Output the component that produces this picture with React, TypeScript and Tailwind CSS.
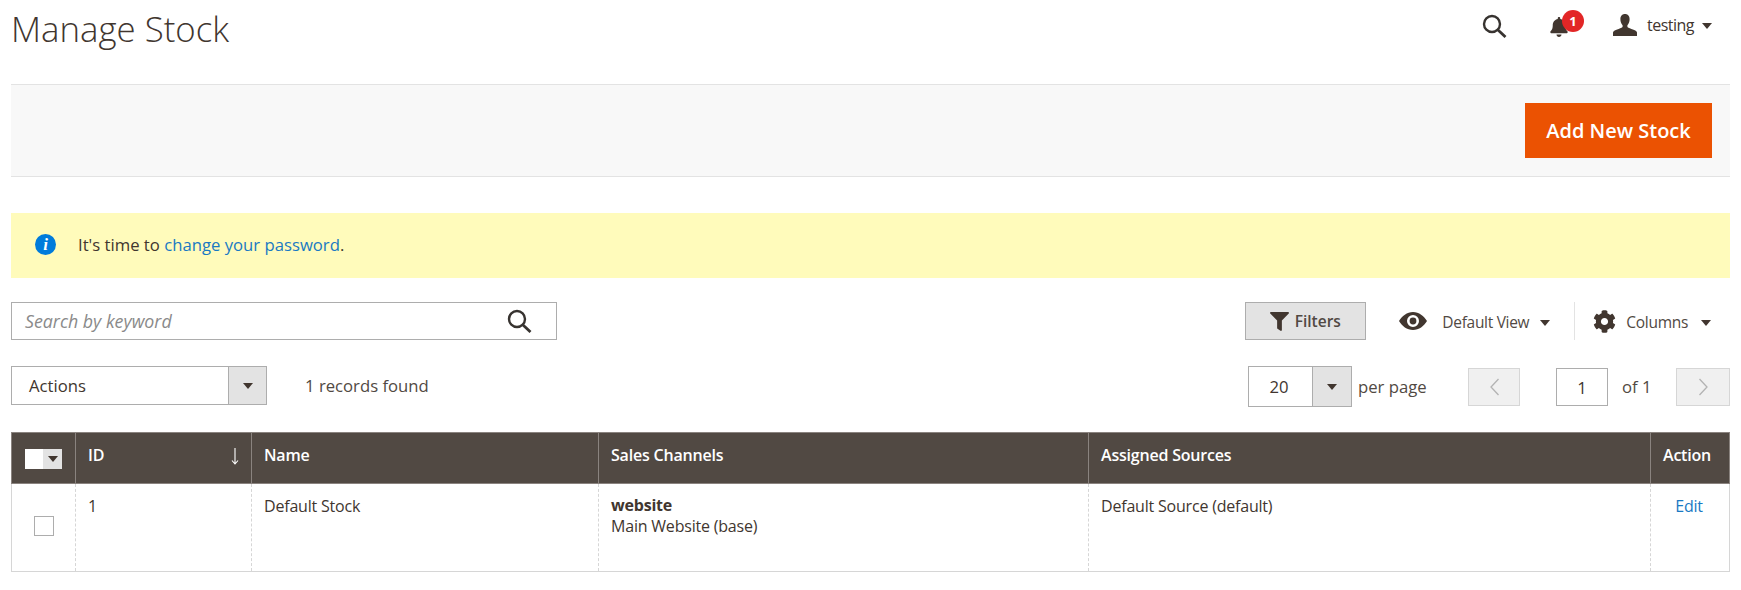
import { FaBell, FaCog, FaFilter } from 'react-icons/fa';

const Caret = ({ className = '' }: { className?: string }) => (
  <span className={`inline-block w-0 h-0 border-x-[5px] border-x-transparent border-t-[6px] border-t-[#41362f] ${className}`} />
);

const SearchIcon = ({ className = '' }: { className?: string }) => (
  <svg className={className} viewBox="0 0 25 24" fill="none" stroke="#373330" strokeWidth="2.4">
    <circle cx="10" cy="10" r="8" />
    <path d="M16 16l7.5 7" strokeWidth="2.8" />
  </svg>
);

const UserIcon = () => (
  <svg className="w-[24px] h-[22px]" viewBox="0 0 24 22" fill="#41362f">
    <path d="M12 0c3 0 4.6 2.2 4.6 5.2 0 2.2-.8 4.6-2.2 6v1.6c0 .8 1.6 1.3 4 2.2 3 1.1 5.6 2 5.6 3.6V22H0v-3.4c0-1.6 2.6-2.5 5.6-3.6 2.4-.9 4-1.4 4-2.2v-1.6c-1.4-1.4-2.2-3.8-2.2-6C7.4 2.2 9 0 12 0z" />
  </svg>
);

const EyeIcon = () => (
  <svg className="w-[28px] h-[18px]" viewBox="0 0 28 18">
    <path fill="#41362f" fillRule="evenodd" d="M14 0c6 0 11 4 14 9-3 5-8 9-14 9S3 14 0 9c3-5 8-9 14-9zm0 3a6 6 0 1 0 0 12 6 6 0 0 0 0-12z" />
    <circle cx="14" cy="9" r="3.4" fill="#41362f" />
  </svg>
);

const Chevron = ({ d }: { d: string }) => (
  <svg className="w-[11px] h-[18px]" viewBox="0 0 11 18" fill="none" stroke="#b3b3b3" strokeWidth="1.3">
    <path d={d} />
  </svg>
);

export default function App() {
  return (
    <div className="w-[1741px] h-[590px] overflow-hidden bg-white px-[11px] font-['Open_Sans',sans-serif] text-[16px] text-[#41362f]">
      {/* Page header */}
      <div className="h-[84px] flex justify-between">
        <h1 className="text-[34.8px] font-light leading-[46px] text-[#41362f] pt-[6px]">Manage Stock</h1>
        <div className="flex items-start pt-[14px] pr-[18px]">
          <SearchIcon className="w-[25px] h-[24px]" />
          <div className="relative ml-[43px] mt-[3px] w-[17px]">
            <FaBell className="w-[18px] h-[20px] text-[#41362f]" />
            <span className="absolute left-[12px] -top-[7px] w-[22px] h-[22px] rounded-full bg-[#e22626] text-white text-[13px] font-bold leading-[22px] text-center">1</span>
          </div>
          <div className="ml-[46px]"><UserIcon /></div>
          <span className="ml-[10px] text-[16px] leading-[22px] tracking-[-0.5px] text-[#41362f]">testing</span>
          <Caret className="ml-[8px] mt-[9px]" />
        </div>
      </div>

      {/* Action band */}
      <div className="h-[93px] bg-[#f8f8f8] border-y border-[#e3e3e3] flex items-center justify-end pr-[18px]">
        <button className="w-[187px] h-[55px] bg-[#eb5202] text-white text-[20px] font-semibold">Add New Stock</button>
      </div>

      {/* Message */}
      <div className="mt-[36px] h-[65px] bg-[#fffbbb] flex items-center pl-[24px] pb-[2px] text-[16.7px]">
        <span className="w-[21px] h-[21px] rounded-full bg-[#007bdb] text-white text-center font-['Liberation_Serif',serif] italic font-bold text-[17px] leading-[21px]">i</span>
        <span className="ml-[22px]">
          It's time to <a className="text-[#1979c3]">change your password</a>.
        </span>
      </div>

      {/* Search and view controls */}
      <div className="mt-[24px] flex items-center h-[38px]">
        <div className="w-[546px] h-[38px] border border-[#adadad] flex items-center justify-between pl-[13px] pr-[24px]">
          <span className="italic text-[#8a8a8a] text-[17.8px]">Search by keyword</span>
          <SearchIcon className="w-[25px] h-[24px]" />
        </div>
        <button className="ml-auto w-[121px] h-[38px] bg-[#e3e3e3] border border-[#adadad] flex items-center justify-center gap-[5px] font-semibold text-[#514943] text-[15.5px] pr-[2px]">
          <FaFilter className="w-[21px] h-[19px] text-[#41362f]" />
          <span className="mt-[1px]">Filters</span>
        </button>
        <div className="ml-[33px] flex items-center">
          <EyeIcon />
          <span className="ml-[15px] mt-[3px] text-[15.5px] tracking-[-0.3px] text-[#514943]">Default View</span>
          <Caret className="ml-[11px] mt-[3px]" />
        </div>
        <div className="ml-[24px] w-px h-[38px] bg-[#e3e3e3]" />
        <div className="ml-[18px] flex items-center pr-[19px]">
          <FaCog className="w-[23px] h-[23px] text-[#41362f]" />
          <span className="ml-[10px] mt-[3px] text-[15.5px] tracking-[-0.3px] text-[#514943]">Columns</span>
          <Caret className="ml-[13px] mt-[3px]" />
        </div>
      </div>

      {/* Mass actions and pager */}
      <div className="mt-[26px] flex items-start h-[41px] text-[16.7px]">
        <div className="w-[256px] h-[39px] border border-[#adadad] flex">
          <span className="flex-1 pl-[17px] leading-[38px] text-[#41362f]">Actions</span>
          <span className="w-[38px] bg-[#e3e3e3] border-l border-[#adadad] flex items-center justify-center"><Caret /></span>
        </div>
        <span className="ml-[38px] leading-[39px] text-[#514943]">1 records found</span>
        <div className="ml-auto flex items-start leading-[41px]">
          <div className="w-[104px] h-[41px] border border-[#adadad] flex">
            <span className="flex-1 text-center leading-[40px] text-[#41362f] pr-[3px]">20</span>
            <span className="w-[39px] bg-[#e3e3e3] border-l border-[#adadad] flex items-center justify-center"><Caret /></span>
          </div>
          <span className="ml-[6px] w-[110px] text-[#514943]">per page</span>
          <span className="mt-[2px] w-[52px] h-[38px] bg-[#f0f0f0] border border-[#d6d6d6] flex items-center justify-center"><Chevron d="M9.5 1L2 9l7.5 8" /></span>
          <span className="mt-[2px] ml-[36px] w-[52px] h-[38px] border border-[#adadad] text-center leading-[37px] text-[#41362f]">1</span>
          <span className="ml-[14px] w-[54px] text-[#514943]">of 1</span>
          <span className="mt-[2px] w-[54px] h-[38px] bg-[#f0f0f0] border border-[#d6d6d6] flex items-center justify-center"><Chevron d="M1.5 1L9 9l-7.5 8" /></span>
        </div>
      </div>

      {/* Grid */}
      <table className="mt-[25px] w-[1718px] table-fixed border-collapse text-left">
        <colgroup>
          <col className="w-[64px]" />
          <col className="w-[176px]" />
          <col className="w-[347px]" />
          <col className="w-[490px]" />
          <col className="w-[562px]" />
          <col className="w-[79px]" />
        </colgroup>
        <thead>
          <tr className="h-[51px] bg-[#514943] text-white font-semibold text-[16px] align-top">
            <th className="border border-[#8a837f] font-semibold">
              <div className="ml-[13px] mt-[16px] w-[37px] h-[20px] flex bg-white">
                <span className="w-[18px]" />
                <span className="flex-1 bg-[#e3e3e3] flex items-center justify-center"><Caret className="border-t-[#000]" /></span>
              </div>
            </th>
            <th className="border border-[#8a837f] font-semibold px-[12px] pt-[10px]">
              <div className="flex justify-between">
                <span className="tracking-[-0.2px]">ID</span>
                <svg className="w-[8px] h-[17px] mt-[5px]" viewBox="0 0 8 17" fill="none" stroke="#fff" strokeWidth="1.1">
                  <path d="M4 0v15.5M1 12.5l3 3.5 3-3.5" />
                </svg>
              </div>
            </th>
            <th className="border border-[#8a837f] font-semibold px-[12px] pt-[10px] tracking-[-0.2px]">Name</th>
            <th className="border border-[#8a837f] font-semibold px-[12px] pt-[10px] tracking-[-0.2px]">Sales Channels</th>
            <th className="border border-[#8a837f] font-semibold px-[12px] pt-[10px] tracking-[-0.2px]">Assigned Sources</th>
            <th className="border border-[#8a837f] font-semibold pl-[12px] pr-[14px] pt-[10px] tracking-[-0.2px]">Action</th>
          </tr>
        </thead>
        <tbody>
          <tr className="h-[88px] align-top text-[#41362f] tracking-[-0.2px] border-b border-[#d6d6d6]">
            <td className="border-x border-[#d6d6d6] [border-right-style:dashed] p-0">
              <div className="ml-[22px] mt-[32px] w-[20px] h-[20px] border border-[#adadad]" />
            </td>
            <td className="border-r border-dashed border-[#d6d6d6] px-[12px] pt-[11px] leading-[22px]">1</td>
            <td className="border-r border-dashed border-[#d6d6d6] px-[12px] pt-[11px] leading-[22px]">Default Stock</td>
            <td className="border-r border-dashed border-[#d6d6d6] px-[12px] pt-[11px] leading-[21px]">
              <div className="font-bold">website</div>
              <div>Main Website (base)</div>
            </td>
            <td className="border-r border-dashed border-[#d6d6d6] px-[12px] pt-[11px] leading-[22px]">Default Source (default)</td>
            <td className="border-r border-[#d6d6d6] pl-[12px] pr-[14px] pt-[11px] leading-[22px] text-center text-[#1979c3]">Edit</td>
          </tr>
        </tbody>
      </table>
    </div>
  );
}
